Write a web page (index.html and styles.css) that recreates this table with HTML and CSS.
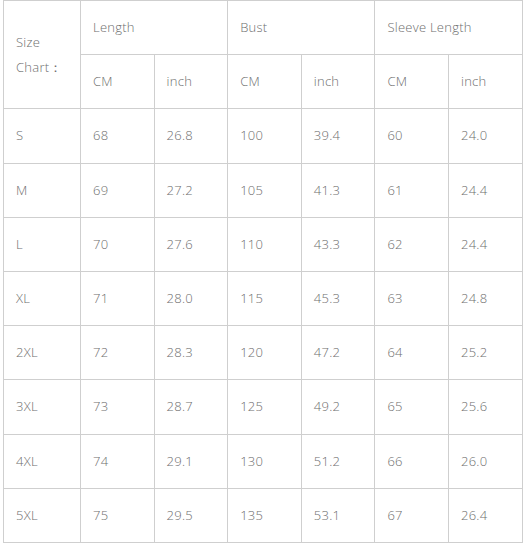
FILE: index.html
```html
<!DOCTYPE html>
<html>
<head>
<meta charset="utf-8">
<link rel="stylesheet" href="styles.css">
</head>
<body>
<table class="chart">
  <colgroup>
    <col class="c-first">
    <col class="c"><col class="c"><col class="c"><col class="c"><col class="c"><col class="c">
  </colgroup>
  <tr class="r">
    <td rowspan="2" class="size">Size Chart：</td>
    <td colspan="2">Length</td>
    <td colspan="2">Bust</td>
    <td colspan="2">Sleeve Length</td>
  </tr>
  <tr class="r">
    <td>CM</td><td>inch</td><td>CM</td><td>inch</td><td>CM</td><td>inch</td>
  </tr>
  <tr class="r"><td>S</td><td>68</td><td>26.8</td><td>100</td><td>39.4</td><td>60</td><td>24.0</td></tr>
  <tr class="r"><td>M</td><td>69</td><td>27.2</td><td>105</td><td>41.3</td><td>61</td><td>24.4</td></tr>
  <tr class="r"><td>L</td><td>70</td><td>27.6</td><td>110</td><td>43.3</td><td>62</td><td>24.4</td></tr>
  <tr class="r"><td>XL</td><td>71</td><td>28.0</td><td>115</td><td>45.3</td><td>63</td><td>24.8</td></tr>
  <tr class="r"><td>2XL</td><td>72</td><td>28.3</td><td>120</td><td>47.2</td><td>64</td><td>25.2</td></tr>
  <tr class="r"><td>3XL</td><td>73</td><td>28.7</td><td>125</td><td>49.2</td><td>65</td><td>25.6</td></tr>
  <tr class="r"><td>4XL</td><td>74</td><td>29.1</td><td>130</td><td>51.2</td><td>66</td><td>26.0</td></tr>
  <tr class="r"><td>5XL</td><td>75</td><td>29.5</td><td>135</td><td>53.1</td><td>67</td><td>26.4</td></tr>
</table>
</body>
</html>
```
FILE: styles.css
```css
html, body {
  margin: 0;
  padding: 0;
  background: #fff;
}
body {
  padding-left: 3px;
  font-family: "Open Sans", "Noto Sans", sans-serif;
  font-size: 13px;
  font-weight: 300;
  letter-spacing: 0.25px;
  color: #6e6e6e;
}
.chart {
  border-collapse: collapse;
  table-layout: fixed;
  width: 519px;
}
.c-first { width: 77px; }
.c { width: 73.6px; }
.chart td {
  border: 1px solid #cfcfcf;
  padding: 0 12px;
  height: 53.2px;
  vertical-align: middle;
  text-align: left;
  line-height: 25px;
}
.chart td.size {
  padding-left: 12px;
}
```
